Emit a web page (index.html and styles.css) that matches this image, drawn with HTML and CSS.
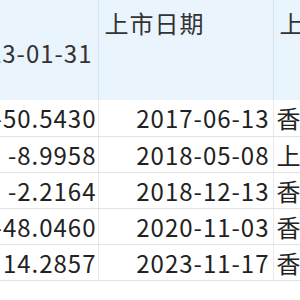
FILE: index.html
```html
<!DOCTYPE html>
<html lang="zh-CN">
<head>
<meta charset="utf-8">
<link rel="stylesheet" href="styles.css">
</head>
<body>
<div class="wrap">
<table class="grid">
  <colgroup>
    <col class="c1">
    <col class="c2">
    <col class="c3">
  </colgroup>
  <thead>
    <tr>
      <th class="num head-mid">截止日2023-01-31</th>
      <th>上市日期</th>
      <th>上市地点</th>
    </tr>
  </thead>
  <tbody>
    <tr><td class="num first">-50.5430</td><td class="num">2017-06-13</td><td>香港联交所</td></tr>
    <tr><td class="num first">-8.9958</td><td class="num">2018-05-08</td><td>上海证券交易所</td></tr>
    <tr><td class="num first">-2.2164</td><td class="num">2018-12-13</td><td>香港联交所</td></tr>
    <tr><td class="num first">-48.0460</td><td class="num">2020-11-03</td><td>香港联交所</td></tr>
    <tr><td class="num first">14.2857</td><td class="num">2023-11-17</td><td>香港联交所</td></tr>
  </tbody>
</table>
</div>
</body>
</html>
```
FILE: styles.css
```css
html, body {
  margin: 0;
  padding: 0;
  overflow: hidden;
  background: #ffffff;
}
.wrap {
  width: 300px;
  height: 300px;
  overflow: hidden;
}
.grid {
  margin-left: -200px;
  border-collapse: collapse;
  table-layout: fixed;
  width: 700px;
  font-family: "Noto Sans CJK SC", "Microsoft YaHei", sans-serif;
  font-size: 24px;
  letter-spacing: 1px;
  color: #222;
}
.c1 { width: 298px; }
.c2 { width: 175px; }
.c3 { width: 227px; }
.grid th {
  height: 100px;
  box-sizing: border-box;
  background: #eaf4fd;
  border-right: 1px solid #d4e5f5;
  font-weight: normal;
  text-align: left;
  vertical-align: top;
  padding: 8px 5px 0 6px;
  line-height: 30px;
  white-space: nowrap;
  overflow: hidden;
  color: #333;
}
.grid th.head-mid {
  padding-top: 38px;
  text-align: right;
  padding-right: 5px;
}
.grid td {
  height: 36px;
  box-sizing: border-box;
  padding: 0 3px 0 3px;
  border-bottom: 1px solid #e2e2e2;
  border-right: 1px solid #e8e8e8;
  line-height: 35px;
  white-space: nowrap;
  overflow: hidden;
}
.grid td.num {
  text-align: right;
}
.grid td.first {
  padding-right: 1px;
}
```
